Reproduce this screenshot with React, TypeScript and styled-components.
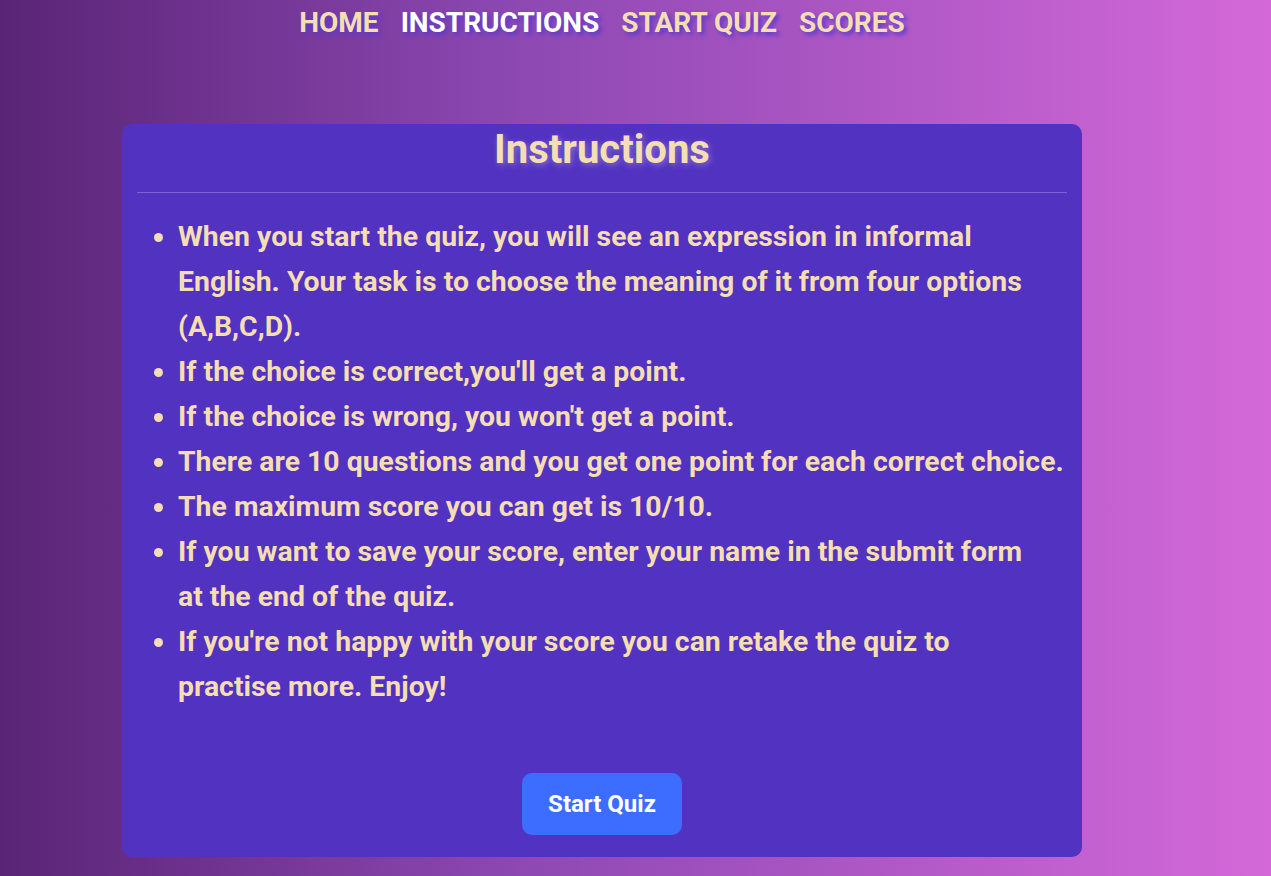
import React from "react"
import styled, { createGlobalStyle } from "styled-components"

const GlobalStyle = createGlobalStyle`
	html, body {
		margin: 0;
		padding: 0;
	}
	body {
		min-height: 876px;
		background: linear-gradient(90deg, #5a2476 0%, #8c48b2 40%, #b65bc9 75%, #d468d9 100%);
		font-family: "Roboto", "Liberation Sans", sans-serif;
		font-weight: bold;
		color: wheat;
	}
`

const Page = styled.div`
	width: 1204px;
	display: flex;
	flex-direction: column;
	align-items: center;
`

const Nav = styled.nav`
	display: flex;
	gap: 22px;
	height: 44px;
	align-items: center;
`

const NavLink = styled.a<{ $active?: boolean }>`
	font-size: 28px;
	text-decoration: none;
	color: ${(props) => (props.$active ? "#ffffff" : "wheat")};
	text-shadow: 3px 3px 4px #5a3ad0;
	cursor: pointer;
`

const Card = styled.main`
	margin-top: 80px;
	width: 960px;
	height: 733px;
	box-sizing: border-box;
	background-color: #5232c1;
	border-radius: 10px;
	padding: 0 15px;
	display: flex;
	flex-direction: column;
	align-items: center;
`

const Title = styled.h1`
	margin: 0;
	padding-top: 2px;
	font-size: 40px;
	line-height: 48px;
	text-shadow: 2px 2px 6px rgba(255, 255, 255, 0.3);
`

const Rule = styled.hr`
	align-self: stretch;
	margin: 18px 0 0;
	border: none;
	border-top: 1px solid #7c64d4;
`

const List = styled.ul`
	align-self: stretch;
	margin: 21px 0 0;
	padding-left: 41px;
	font-size: 28.4px;
	line-height: 45px;
`

const Item = styled.li`
	white-space: nowrap;
`

const StartButton = styled.button`
	margin-top: 64px;
	flex-shrink: 0;
	width: 160px;
	height: 62px;
	border: none;
	border-radius: 10px;
	background-color: #3d6dff;
	color: #ffffff;
	font-family: inherit;
	font-weight: bold;
	font-size: 24px;
	cursor: pointer;
`

const items = [
	[
		"When you start the quiz, you will see an expression in informal",
		"English. Your task is to choose the meaning of it from four options",
		"(A,B,C,D).",
	],
	["If the choice is correct,you'll get a point."],
	["If the choice is wrong, you won't get a point."],
	["There are 10 questions and you get one point for each correct choice."],
	["The maximum score you can get is 10/10."],
	[
		"If you want to save your score, enter your name in the submit form",
		"at the end of the quiz.",
	],
	[
		"If you're not happy with your score you can retake the quiz to",
		"practise more. Enjoy!",
	],
]

const App = () => {
	return (
		<>
			<GlobalStyle />
			<Page>
				<Nav>
					<NavLink>HOME</NavLink>
					<NavLink $active>INSTRUCTIONS</NavLink>
					<NavLink>START QUIZ</NavLink>
					<NavLink>SCORES</NavLink>
				</Nav>
				<Card>
					<Title>Instructions</Title>
					<Rule />
					<List>
						{items.map((lines, index) => (
							<Item key={index}>
								{lines.map((line, i) => (
									<React.Fragment key={i}>
										{i > 0 ? <br /> : null}
										{line}
									</React.Fragment>
								))}
							</Item>
						))}
					</List>
					<StartButton>Start Quiz</StartButton>
				</Card>
			</Page>
		</>
	)
}

export default App
